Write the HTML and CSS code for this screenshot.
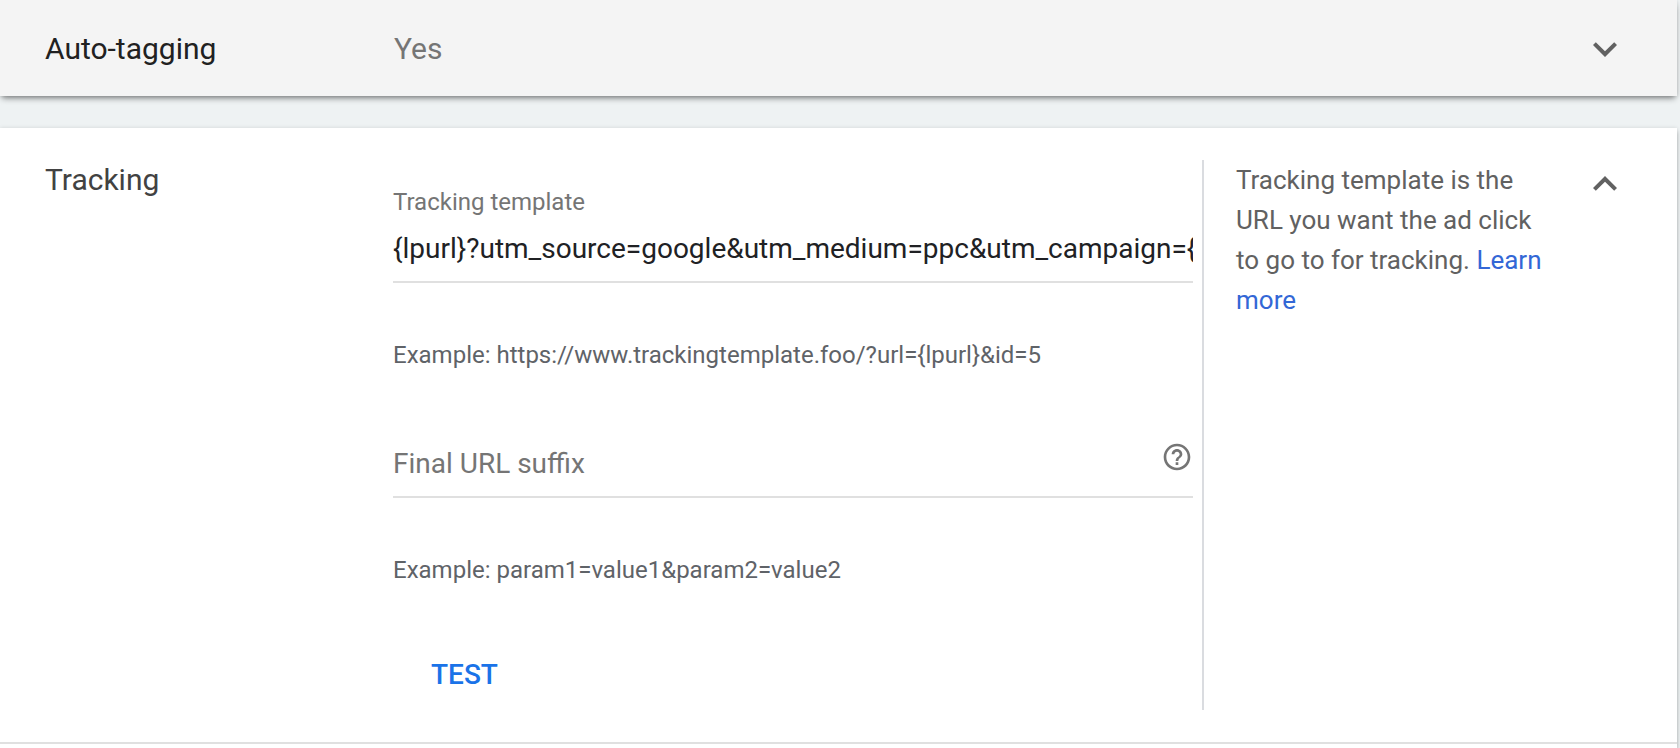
FILE: index.html
```html
<!DOCTYPE html>
<html lang="en">
<head>
<meta charset="utf-8">
<title>Account settings</title>
<link rel="stylesheet" href="styles.css">
</head>
<body>
<main class="settings">
  <section class="card card-collapsed">
    <h2 class="title">Auto-tagging</h2>
    <p class="value">Yes</p>
    <button class="toggle" type="button" aria-label="Expand Auto-tagging" aria-expanded="false">
      <svg class="chevron" viewBox="0 0 24 24" aria-hidden="true"><path d="M7.41 8.59 12 13.17l4.59-4.58L18 10l-6 6-6-6z"/></svg>
    </button>
  </section>

  <section class="card card-open">
    <div class="panel">
      <h2 class="title">Tracking</h2>
      <form class="form">
        <label class="label" for="template">Tracking template</label>
        <div class="field">
          <input class="input" id="template" type="text" value="{lpurl}?utm_source=google&amp;utm_medium=ppc&amp;utm_campaign={campaignid}">
        </div>
        <p class="hint">Example: https://www.trackingtemplate.foo/?url={lpurl}&amp;id=5</p>
        <div class="field field-suffix">
          <input class="input" id="suffix" type="text" placeholder="Final URL suffix" aria-label="Final URL suffix">
          <button class="info" type="button" aria-label="Help">
            <svg class="info-icon" viewBox="0 0 24 24" aria-hidden="true"><path d="M11 18h2v-2h-2v2zm1-16C6.48 2 2 6.48 2 12s4.480 10 10 10 10-4.480 10-10S17.520 2 12 2zm0 18c-4.410 0-8-3.590-8-8s3.590-8 8-8 8 3.590 8 8-3.590 8-8 8zm0-14c-2.210 0-4 1.790-4 4h2c0-1.100.9-2 2-2s2 .9 2 2c0 2-3 1.750-3 5h2c0-2.250 3-2.500 3-5 0-2.210-1.790-4-4-4z"/></svg>
          </button>
        </div>
        <p class="hint">Example: param1=value1&amp;param2=value2</p>
        <button class="test" type="button">TEST</button>
      </form>
      <p class="help">Tracking template is the URL you want the ad click to go to for tracking. <a class="link" href="#learn-more">Learn more</a></p>
      <button class="toggle" type="button" aria-label="Collapse Tracking" aria-expanded="true">
        <svg class="chevron" viewBox="0 0 24 24" aria-hidden="true"><path d="M12 8l-6 6 1.410 1.410L12 10.830l4.590 4.580L18 14z"/></svg>
      </button>
    </div>
  </section>
</main>
</body>
</html>
```
FILE: styles.css
```css
* {
  box-sizing: border-box;
}

body {
  margin: 0;
  background: #eef2f3;
  font-family: Roboto, "Liberation Sans", sans-serif;
}

h2,
p {
  margin: 0;
  font-weight: 400;
}

button {
  margin: 0;
  padding: 0;
  border: 0;
  background: none;
  font-family: inherit;
  cursor: pointer;
}

.settings {
  display: flex;
  flex-direction: column;
  gap: 32px;
  min-height: 100vh;
  padding-right: 3px;
}

.card {
  box-shadow: 0 0 4px rgba(0, 0, 0, 0.12), 0 4px 4px rgba(0, 0, 0, 0.24);
}

.card-collapsed {
  display: grid;
  grid-template-columns: 349px 1fr 48px;
  align-items: center;
  min-height: 96px;
  padding: 2px 48px 0 45px;
  background: #f4f4f4;
  box-shadow: 0 0 4px rgba(0, 0, 0, 0.12), 0 4px 6px -2px rgba(0, 0, 0, 0.48);
}

.card-open {
  flex: 1;
  background: #fff;
}

.panel {
  display: grid;
  grid-template-columns: 348px 1fr 379px 48px;
  padding: 32px 48px 32px 45px;
  border-bottom: 2px solid #e0e0e0;
}

.title {
  font-size: 30px;
  line-height: 40px;
  color: #424242;
}

.card-collapsed .title {
  color: #212121;
}

.value {
  font-size: 30px;
  line-height: 40px;
  color: #757575;
}

.toggle {
  display: flex;
  align-items: center;
  justify-content: center;
  width: 48px;
  height: 48px;
}

.chevron {
  width: 48px;
  height: 48px;
  fill: #616161;
}

.form {
  display: flex;
  flex-direction: column;
  padding: 26px 9px 0 0;
}

.label {
  font-size: 24px;
  line-height: 32px;
  color: #757575;
}

.field {
  display: flex;
  border-bottom: 2px solid #e0e0e0;
}

.field-suffix {
  margin-top: 62px;
}

.input {
  flex: 1;
  min-width: 0;
  height: 63px;
  padding: 0 0 2px;
  border: 0;
  outline: 0;
  background: none;
  font-family: inherit;
  font-size: 28px;
  color: #202124;
}

.input::placeholder {
  color: #757575;
  opacity: 1;
}

.info {
  width: 32px;
  height: 32px;
  margin-top: 8px;
}

.info-icon {
  display: block;
  width: 32px;
  height: 32px;
  fill: #757575;
}

.hint {
  margin-top: 56px;
  font-size: 24px;
  line-height: 32px;
  color: #5f6368;
}

.test {
  align-self: flex-start;
  height: 72px;
  margin-top: 52px;
  padding: 0 38px;
  font-size: 28px;
  font-weight: 500;
  color: #1a73e8;
}

.help {
  padding: 0 32px;
  border-left: 2px solid #dadce0;
  font-size: 26px;
  line-height: 40px;
  color: #616161;
}

.link {
  color: #3367d6;
  text-decoration: none;
}
```
